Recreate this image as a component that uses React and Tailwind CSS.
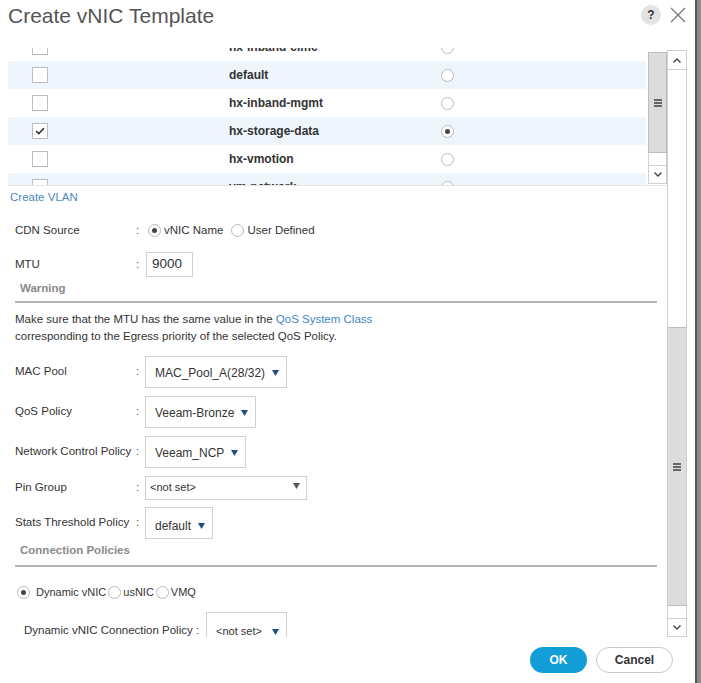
import React from 'react';

const vlans = [
  { name: 'hx-inband-cimc', checked: false },
  { name: 'default', checked: false },
  { name: 'hx-inband-mgmt', checked: false },
  { name: 'hx-storage-data', checked: true },
  { name: 'hx-vmotion', checked: false },
  { name: 'vm-network', checked: false },
];

function Caret({ color = '#1d4f80' }) {
  return (
    <svg width="7" height="6" viewBox="0 0 7 6" className="shrink-0">
      <path d="M0 0 L7 0 L3.5 6 Z" fill={color} />
    </svg>
  );
}

function Radio({ on }) {
  return (
    <span className="w-[13px] h-[13px] rounded-full border border-[#b9b9b9] bg-white flex items-center justify-center shrink-0">
      {on && <span className="w-[5px] h-[5px] rounded-full bg-[#444]" />}
    </span>
  );
}

function Chevron({ up }) {
  return (
    <svg width="10" height="7" viewBox="0 0 10 7">
      <path d={up ? 'M1.5 5.5 L5 2 L8.5 5.5' : 'M1.5 1.5 L5 5 L8.5 1.5'} fill="none" stroke="#444" strokeWidth="1.4" />
    </svg>
  );
}

function Grip() {
  return (
    <div className="flex flex-col gap-[1px]">
      <span className="block w-[8px] h-[2px] bg-[#666]" />
      <span className="block w-[8px] h-[2px] bg-[#666]" />
      <span className="block w-[8px] h-[2px] bg-[#666]" />
    </div>
  );
}

function FieldRow({ label, children, className = '' }) {
  return (
    <div className={`flex items-center pl-[7px] ${className}`}>
      <span className="w-[121px] text-[11.5px] text-[#333] whitespace-nowrap">{label}</span>
      <span className="w-[10px] text-[11.5px] text-[#555]">:</span>
      {children}
    </div>
  );
}

function Select({ value, className = '' }) {
  return (
    <div className={`ml-[-1px] h-[32px] flex items-center gap-[7px] pl-[9px] pr-[7px] pt-[2px] border border-[#cfcfcf] bg-white ${className}`}>
      <span className="text-[12px] text-[#333] whitespace-nowrap">{value}</span>
      <Caret />
    </div>
  );
}

export default function App() {
  return (
    <div className="flex w-[701px] h-[683px] bg-white overflow-hidden font-['Liberation_Sans',Arial,sans-serif]">
      <div className="flex flex-col w-[695px]">
        {/* Header */}
        <div className="h-[48px] flex items-start justify-between pl-2 pr-[9px]">
          <h1 className="pt-[3px] leading-[26px] text-[21px] text-[#555] font-normal">Create vNIC Template</h1>
          <div className="flex items-center gap-[9px] pt-[5px]">
            <span className="w-[20px] h-[20px] rounded-full bg-[#e3e3e3] flex items-center justify-center text-[12px] font-bold text-[#333]">?</span>
            <svg width="16" height="16" viewBox="0 0 16 16">
              <path d="M1 1 L15 15 M15 1 L1 15" stroke="#777" strokeWidth="1.3" />
            </svg>
          </div>
        </div>

        {/* Body */}
        <div className="flex h-[589px]">
          <div className="w-[667px] pl-2 flex flex-col overflow-hidden">
            {/* VLAN table, scrolled part way */}
            <div className="flex h-[138px] shrink-0 border-b border-[#e6e6e6]">
              <div className="w-[638px] overflow-hidden">
                <div className="mt-[-15px]">
                  {vlans.map((v, i) => (
                    <div key={v.name} className={`h-[28px] flex items-center ${i % 2 === 1 ? 'bg-[#eef5fc]' : 'bg-white'}`}>
                      <div className="w-[221px] pl-[24px]">
                        <span className="w-[16px] h-[16px] border border-[#bdbdbd] bg-white flex items-center justify-center">
                          {v.checked && (
                            <svg width="10" height="8" viewBox="0 0 10 8">
                              <path d="M1 4 L3.8 6.6 L9 1.2" fill="none" stroke="#333" strokeWidth="1.6" />
                            </svg>
                          )}
                        </span>
                      </div>
                      <span className="w-[212px] text-[12px] font-bold text-[#333]">{v.name}</span>
                      <Radio on={v.checked} />
                    </div>
                  ))}
                </div>
              </div>
              <div className="ml-[2px] w-[19px] pt-[4px] flex flex-col">
                <div className="h-[101px] bg-[#dcdcdc] border border-[#bdbdbd] flex items-center justify-center">
                  <Grip />
                </div>
                <div className="h-[12px] border-x border-[#cfcfcf] bg-white" />
                <div className="h-[19px] border border-[#cfcfcf] bg-white flex items-center justify-center">
                  <Chevron />
                </div>
              </div>
            </div>

            <div className="h-[23px] shrink-0 flex items-center pl-[2px] text-[11.5px] text-[#4d88bf]">Create VLAN</div>

            <FieldRow label="CDN Source" className="h-[43px] shrink-0">
              <div className="ml-[2px] flex items-center gap-[3px] text-[11.5px] text-[#333]">
                <Radio on />
                <span className="mr-[5px]">vNIC Name</span>
                <Radio />
                <span>User Defined</span>
              </div>
            </FieldRow>

            <FieldRow label="MTU" className="h-[25px] shrink-0">
              <div className="h-[25px] w-[47px] border border-[#cfcfcf] flex items-center pl-[5px] text-[13.5px] text-[#333]">9000</div>
            </FieldRow>

            <div className="h-[24px] shrink-0 flex items-center pl-[12px] text-[11.5px] font-bold text-[#8a8a8a]">Warning</div>
            <div className="h-[2px] shrink-0 ml-[7px] w-[642px] bg-[#b3b3b3]" />

            <p className="mt-[8px] pl-[7px] text-[11.5px] leading-[17px] text-[#333]">
              Make sure that the MTU has the same value in the <span className="text-[#3f86c4]">QoS System Class</span>
              <br />
              corresponding to the Egress priority of the selected QoS Policy.
            </p>

            <FieldRow label="MAC Pool" className="mt-[11px] shrink-0">
              <Select value="MAC_Pool_A(28/32)" />
            </FieldRow>
            <FieldRow label="QoS Policy" className="mt-[8px] shrink-0">
              <Select value="Veeam-Bronze" />
            </FieldRow>
            <FieldRow label="Network Control Policy" className="mt-[8px] shrink-0">
              <Select value="Veeam_NCP" className="h-[31px]" />
            </FieldRow>
            <FieldRow label="Pin Group" className="mt-[8px] shrink-0">
              <div className="ml-[-1px] h-[24px] w-[162px] border border-[#cfcfcf] flex items-center justify-between pl-[4px] pr-[6px]">
                <span className="text-[11px] text-[#333] pb-[2px]">&lt;not set&gt;</span>
                <span className="pb-[4px]"><Caret color="#555" /></span>
              </div>
            </FieldRow>
            <FieldRow label="Stats Threshold Policy" className="mt-[7px] shrink-0">
              <Select value="default" className="pt-[6px]" />
            </FieldRow>

            <div className="h-[24px] shrink-0 flex items-center pl-[12px] text-[11.5px] font-bold text-[#8a8a8a]">Connection Policies</div>
            <div className="h-[2px] shrink-0 mt-[2px] ml-[7px] w-[642px] bg-[#b3b3b3]" />

            <div className="mt-[16px] h-[18px] shrink-0 flex items-center gap-[2px] pl-[9px] text-[11px] text-[#333]">
              <Radio on />
              <span className="ml-[4px]">Dynamic vNIC</span>
              <Radio />
              <span>usNIC</span>
              <Radio />
              <span>VMQ</span>
            </div>

            <div className="mt-[11px] flex items-start shrink-0 pl-[16px]">
              <span className="mt-[10px] w-[182px] text-[11.5px] text-[#333] whitespace-nowrap">Dynamic vNIC Connection Policy :</span>
              <div className="h-[30px] w-[81px] border border-[#cfcfcf] flex items-center gap-[10px] pl-[9px] pt-[9px]">
                <span className="text-[11px] text-[#333]">&lt;not set&gt;</span>
                <Caret />
              </div>
            </div>
          </div>

          {/* Outer scrollbar */}
          <div className="mt-[2px] w-[20px] h-[587px] border border-[#cfcfcf] flex flex-col bg-white">
            <div className="h-[19px] border-b border-[#cfcfcf] flex items-center justify-center">
              <Chevron up />
            </div>
            <div className="h-[257px]" />
            <div className="h-[279px] bg-[#dcdcdc] border-y border-[#bdbdbd] flex items-center justify-center">
              <Grip />
            </div>
            <div className="h-[12px]" />
            <div className="flex-1 border-t border-[#cfcfcf] flex items-center justify-center">
              <Chevron />
            </div>
          </div>
        </div>

        {/* Footer */}
        <div className="flex justify-end gap-[9px] pt-[10px] pr-[22px]">
          <button className="h-[26px] w-[57px] rounded-full bg-[#129fd8] text-white text-[12px] font-bold">OK</button>
          <button className="h-[26px] w-[77px] rounded-full border border-[#c9c9c9] bg-white text-[#333] text-[12px] font-bold">Cancel</button>
        </div>
      </div>
      <div className="w-[6px] h-full border-l-[2px] border-[#555] bg-[#8a8a8a]" />
    </div>
  );
}
